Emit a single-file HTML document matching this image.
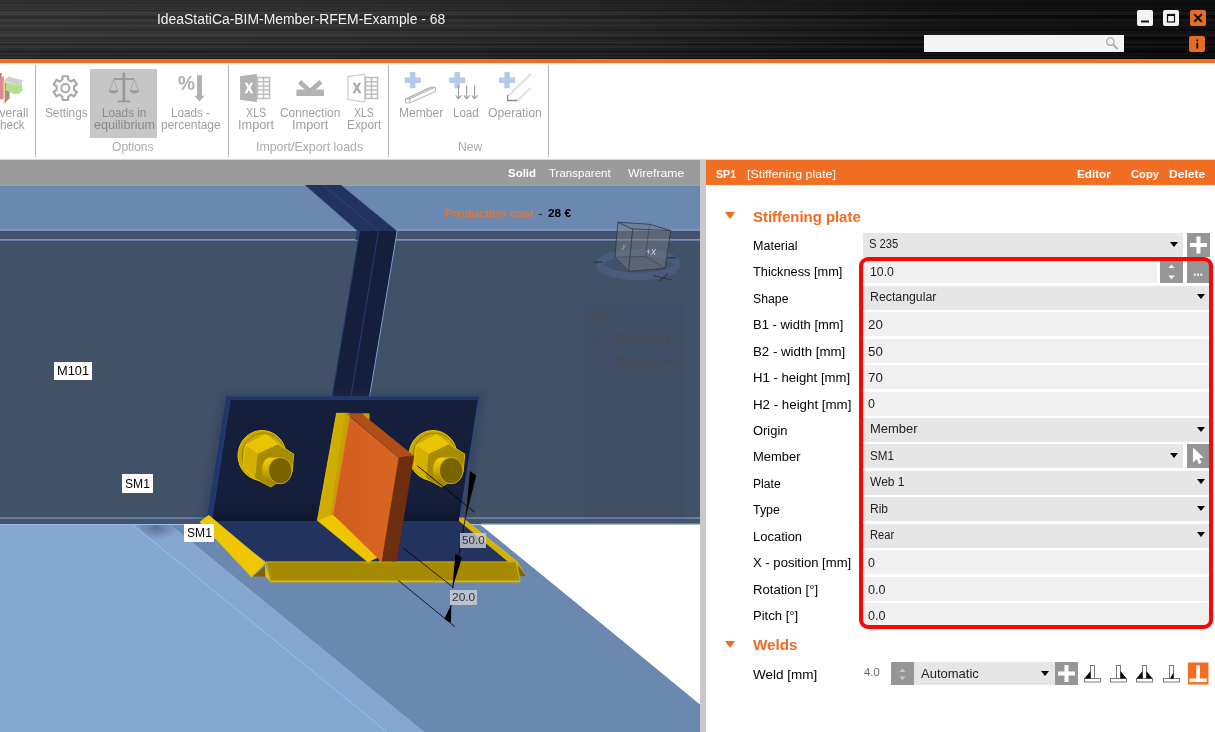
<!DOCTYPE html>
<html lang="en">
<head>
<meta charset="utf-8">
<title>IdeaStatiCa-BIM-Member-RFEM-Example - 68</title>
<style>
*{box-sizing:border-box;margin:0;padding:0}
html,body{width:1215px;height:732px;overflow:hidden;background:#fff}
body{font-family:"Liberation Sans","DejaVu Sans",sans-serif;font-size:12px;color:#000;position:relative}
.abs{position:absolute}
#titlebar{position:absolute;left:0;top:0;width:1215px;height:59px;overflow:hidden;
 background:
  linear-gradient(180deg,rgba(0,0,0,.22) 0,rgba(0,0,0,0) 12%,rgba(0,0,0,0) 62%,rgba(0,0,0,.32) 100%),
  repeating-linear-gradient(180deg,rgba(255,255,255,.055) 0,rgba(255,255,255,0) 1.5px,rgba(0,0,0,.16) 3px,rgba(0,0,0,0) 4px,rgba(255,255,255,.04) 5.5px,rgba(0,0,0,.1) 7px),
  repeating-linear-gradient(180deg,rgba(0,0,0,.14) 0,rgba(255,255,255,.05) 2px,rgba(0,0,0,0) 4.5px,rgba(0,0,0,.16) 8px,rgba(255,255,255,.045) 9.5px,rgba(0,0,0,.14) 11px),
  linear-gradient(90deg,#343434 0%,#2f2f2f 28%,#262626 48%,#1a1a1a 62%,#0e0e0e 78%,#090909 100%);}
#orange{position:absolute;left:0;top:59px;width:1215px;height:4px;background:#f26e22}
.wbtn{position:absolute;top:10px;width:16px;height:16px;border-radius:2px;background:#f2f2f2}
#search{position:absolute;left:924px;top:35px;width:200px;height:17px;background:#f4f4f4}
/* ribbon */
#ribbon{position:absolute;left:0;top:63px;width:1215px;height:97px;background:#fff;color:#9a9a9a;font-size:12px}
.sep{position:absolute;top:2px;width:1px;height:92px;background:#b5b5b5}
.rl{position:absolute;text-align:center;line-height:13px;white-space:nowrap;color:#9b9b9b;font-size:11.5px}
.gl{position:absolute;text-align:center;white-space:nowrap;color:#a4a4a4;font-size:11.5px;top:78px}
/* scene */
#vbar{position:absolute;left:0;top:160px;width:700px;height:25px;background:#9b9b9b;color:#fff;font-size:11.5px}
#split{position:absolute;left:700px;top:160px;width:6px;height:572px;background:#c9c9c9}
#scene{position:absolute;left:0;top:185px;width:700px;height:547px;overflow:hidden;background:#fff}
/* right panel */
#phead{position:absolute;left:706px;top:160px;width:509px;height:25px;background:#f26e22;color:#fff;font-size:11.5px;line-height:25px}
#panel{position:absolute;left:706px;top:185px;width:509px;height:547px;background:#fff}
.h{position:absolute;left:753px;color:#f26a1e;font-weight:bold;font-size:14.5px;white-space:nowrap;line-height:18px}
.tri{position:absolute;left:725px;width:0;height:0;border-left:5px solid transparent;border-right:5px solid transparent;border-top:7px solid #f26a1e}
.lb{position:absolute;left:753px;font-size:12.4px;line-height:24px;white-space:nowrap;color:#111}
.f{position:absolute;left:863px;height:24px;font-size:11.6px;line-height:23px;white-space:nowrap;color:#222}
.cb{background:#e6e6e6;padding-left:7px}
.tx{background:#f0f0f0;padding-left:5px}
.arr{position:absolute;width:0;height:0;border-left:4.4px solid transparent;border-right:4.4px solid transparent;border-top:5.8px solid #000;margin-left:-.5px}
.sq{position:absolute;width:24px;height:24px;background:#969696}

.tr{font-size:12px;font-weight:bold;color:#4b4f5c;line-height:16px;white-space:nowrap}
.tag{background:#fff;color:#000;font-size:12px;text-align:center;line-height:18px;white-space:nowrap}
.dim{background:rgba(204,209,218,.8);color:#333;font-size:10.5px;text-align:center;line-height:14.5px;white-space:nowrap}
.t{position:absolute;white-space:nowrap;transform-origin:0 0}
</style>
</head>
<body>
<div id="titlebar">
</div>

<div class="wbtn" style="left:1137px"><svg width="16" height="16"><rect x="4" y="10.5" width="8" height="2" fill="#111"/></svg></div>
<div class="wbtn" style="left:1163px"><svg width="16" height="16"><rect x="4.5" y="4.5" width="7" height="7.5" fill="none" stroke="#111" stroke-width="1.2"/><rect x="4" y="4" width="8" height="2" fill="#111"/></svg></div>
<div class="wbtn" style="left:1189.5px;background:#e66d22"><svg width="16" height="16"><path d="M4.3 4.3l7.4 7.4M11.7 4.3l-7.4 7.4" stroke="#111" stroke-width="2" fill="none"/></svg></div>
<div class="abs" style="left:1188.5px;top:35.5px;width:16.5px;height:16px;border-radius:2px;background:#e66d22"><svg width="16.5" height="16"><rect x="7.4" y="3.6" width="1.8" height="1.9" fill="#111"/><rect x="7.4" y="6.8" width="1.8" height="5.8" fill="#111"/></svg></div>
<div id="search"><svg width="200" height="17"><circle cx="186.3" cy="6.6" r="3.7" fill="none" stroke="#aaa" stroke-width="1.3"/><path d="M189 9.4l4.6 4.8" stroke="#aaa" stroke-width="1.8"/></svg></div>
<div id="orange"></div>
<div id="ribbon"></div>

<!-- ribbon -->
<div class="sep" style="left:35px;top:65px"></div>
<div class="sep" style="left:228px;top:65px"></div>
<div class="sep" style="left:388px;top:65px"></div>
<div class="sep" style="left:548px;top:65px"></div>
<div class="abs" style="left:0;top:159px;width:1215px;height:1px;background:#d9d9d9"></div>
<div class="abs" style="left:90px;top:69px;width:67px;height:68.5px;background:#c6c6c6"></div>
<svg class="abs" style="left:0;top:63px" width="560" height="97" viewBox="0 63 560 97">
 <!-- overall check icon -->
 <path d="M0 73.1h1.4v3.3h2.4v22.9H0z" fill="#d98d91"/>
 <path d="M0 73.1h1.4v3.3H0z" fill="#b87a7e"/>
 <path d="M4.9 82.4h1.2v7.2l3.5 2.1v6.5l-4.7 5z" fill="#a39382"/>
 <path d="M8.7 76l1.1.5-4.9 5.6v21.4l-1.4.2-.1-22.5z" fill="#f2c696"/>
 <path d="M5.2 81.3l4.6-4.4 13.7 3.6-4.6 4.9z" fill="#cfcfcf"/>
 <path d="M6 82.3l12.9 3.1 3-3v7.6l1.6-.5-4.9 4.4h-3.8l-9.9-4.3 1.1-.6z" fill="#b6dd93"/>
 <path d="M4.9 89.8l1.6-1.1 12.4 3 3-2.6 1.6.4-4.9 4.4h-3.8z" fill="#aee486"/>
  <!-- gear -->
 <g fill="none" stroke="#a9a9a9" stroke-linejoin="round">
  <path d="M68.1 79.6 L68.1 76.2 L62.5 76.2 L62.5 79.6 L59.3 81.5 L56.5 79.7 L53.6 84.6 L56.6 86.2 L56.6 90.0 L53.6 91.6 L56.5 96.5 L59.3 94.7 L62.5 96.6 L62.5 100.0 L68.1 100.0 L68.1 96.6 L71.3 94.7 L74.1 96.5 L77.0 91.6 L74.0 90.0 L74.0 86.2 L77.0 84.6 L74.1 79.7 L71.3 81.5z" stroke-width="2.1"/>
  <circle cx="65.3" cy="88.1" r="4.1" stroke-width="2"/>
 </g>
 <!-- scale -->
 <g stroke="#9a9a9a" fill="none">
  <path d="M123.9 74V101.2" stroke-width="2.8" stroke-linecap="round"/>
  <path d="M118.6 101.4H129.3" stroke-width="1.9" stroke-linecap="round"/>
  <path d="M113.6 79H134.2" stroke-width="1.8"/>
  <path d="M113.6 79.6l-4.3 11.3M113.6 79.6l4.3 11.3M134.4 79.6l-4.3 11.3M134.4 79.6l4.3 11.3" stroke-width=".8" stroke="#a2a2a2"/>
  <path d="M109 90.8q4.6 5 9.2 0zM129.8 90.8q4.6 5 9.2 0z" fill="#9a9a9a" stroke-width=".8"/>
 </g>
 <!-- percent arrow -->
 <path d="M197 75.2h4.9v20.6h2.6l-5 5.8-5.2-5.8h2.7z" fill="#b0b0b0"/>
 <!-- xls import -->
 <path d="M240.1 76.3l16.8-2.4v28.3l-16.8-2.5z" fill="#b2b2b2"/>
 <g stroke="#bcbcbc" stroke-width="1.5" fill="none">
  <rect x="257.5" y="77.5" width="12" height="21"/>
  <path d="M263.5 77.5v21M257.5 81.7h12M257.5 85.9h12M257.5 90.1h12M257.5 94.3h12"/>
 </g>
 <!-- connection import -->
 <rect x="296.4" y="89.6" width="27.6" height="6.4" fill="#b2b2b2"/>
 <path d="M299.5 81.7L311 92M320.9 81.7L309.4 92" stroke="#b2b2b2" stroke-width="4.7" fill="none"/>
 <!-- xls export -->
 <path d="M347.9 76.6l16.8-2.5v28l-16.8-2.5z" fill="#fff" stroke="#c9c9c9" stroke-width="1.1"/>
 <g stroke="#bcbcbc" stroke-width="1.5" fill="none">
  <rect x="365.5" y="77.5" width="12" height="21"/>
  <path d="M371.5 77.5v21M365.5 81.7h12M365.5 85.9h12M365.5 90.1h12M365.5 94.3h12"/>
 </g>
 <!-- member -->
 <path d="M410 72.1h5.4v5.4h5.4v5.4h-5.4v5.4h-5.4v-5.4h-5.4v-5.4h5.4z" fill="#b3caeb"/>
 <g stroke="#b2b2b2" stroke-width="1" fill="#fff">
  <path d="M405.5 98.8l25-11.6 4.8 0.2v4.2l-25.4 11.3h-4.4z"/>
  <path d="M405.5 98.8h4.4v4.1M409.9 98.8l25-11.4M407.5 98.6l25-11.4" fill="none"/>
 </g>
 <!-- load -->
 <path d="M454.5 72.1h5.4v5.4h5.4v5.4h-5.4v5.4h-5.4v-5.4h-5.4v-5.4h5.4z" fill="#b3caeb"/>
 <g stroke="#999" stroke-width="1.1" fill="none">
  <path d="M458.5 85.5v13M455.6 95.3l2.9 3.4 2.9-3.4M466.7 85.5v13M463.8 95.3l2.9 3.4 2.9-3.4M474.6 85.5v13M471.7 95.3l2.9 3.4 2.9-3.4"/>
 </g>
 <!-- operation -->
 <path d="M504.4 72.1h5.4v5.4h5.4v5.4h-5.4v5.4h-5.4v-5.4h-5.4v-5.4h5.4z" fill="#b3caeb"/>
 <path d="M507.4 95.3l23.4-21.8v14l-13.6 13.2h-9.8z" fill="#fff"/>
 <g stroke="#e3e3e3" stroke-width="2.5" fill="none"><path d="M508.3 95.6l22.6-21.6M517.8 100.4l13-12.6"/></g>
 <path d="M507.6 95v5.5h9.8" stroke="#8c8c8c" stroke-width="1.3" fill="none"/>
</svg>
<div id="vbar"></div>
<div id="scene"></div>

<svg class="abs" style="left:0;top:185px" width="700" height="547" viewBox="0 185 700 547">
 <defs>
  <linearGradient id="gw" x1="0" y1="0" x2="0" y2="1"><stop offset="0" stop-color="#151e3b"/><stop offset=".8" stop-color="#151e3b"/><stop offset="1" stop-color="#101830"/></linearGradient>
  <radialGradient id="gsh" cx=".5" cy=".5" r=".5"><stop offset="0" stop-color="#2c3c5c" stop-opacity=".5"/><stop offset="1" stop-color="#2c3c5c" stop-opacity="0"/></radialGradient>
  <linearGradient id="gor" x1="0" y1="0" x2="1" y2="0"><stop offset="0" stop-color="#cf5d1f"/><stop offset=".5" stop-color="#d66221"/><stop offset="1" stop-color="#d86522"/></linearGradient>
  <linearGradient id="gcy" x1="0" y1="0" x2="0" y2="1"><stop offset="0" stop-color="#f2cf00"/><stop offset=".45" stop-color="#d8b400"/><stop offset="1" stop-color="#9a8000"/></linearGradient>
 </defs>
 <!-- white background right -->
 <rect x="0" y="185" width="700" height="547" fill="#fff"/>
 <!-- top flange band -->
 <rect x="0" y="185" width="700" height="46" fill="#6b89b0"/>
 <rect x="0" y="185" width="700" height="1" fill="#85a5d2"/>
 <!-- web -->
 <rect x="0" y="230" width="700" height="295" fill="#415168"/>
 <rect x="0" y="230.5" width="700" height="9" fill="#44536b"/>
 <rect x="0" y="229.6" width="700" height="1.2" fill="#84a4d0"/>
 <rect x="0" y="239.2" width="700" height="1.3" fill="#86a6d4"/>
 <!-- lower flange: light blue + mid blue -->
 <path d="M0 524.5H481l219 180V732H0z" fill="#6b89b0"/>
 <path d="M0 524.5H170.2L424 732H0z" fill="#86a6d2"/>
 <path d="M479.4 524L700 703.2V524z" fill="#fff"/>
 <path d="M133 525L387.2 732" stroke="#9cbdec" stroke-width="1" fill="none"/>
 <path d="M170.2 525L424 732" stroke="#93b2dc" stroke-width=".6" fill="none"/>
 
 <!-- web bottom edge -->
 <rect x="0" y="518.2" width="700" height="6.3" fill="#44536b"/>
 <rect x="0" y="517.5" width="700" height="1.1" fill="#7f9fca"/>
 <rect x="0" y="524" width="481" height="1.1" fill="#9dbbe4"/>
 <rect x="481" y="523.6" width="219" height="1" fill="#b9c6da"/>
 <!-- shadows -->
 <clipPath id="cpsh"><path d="M134 525H172L200 548H162z"/></clipPath><ellipse cx="156" cy="527" rx="24" ry="13" fill="url(#gsh)" clip-path="url(#cpsh)"/>
 <!-- stiffener strip on M101 -->
 <path d="M304.7 185H341.2L397.2 231 357.4 231z" fill="#22335f"/>
 <path d="M323 185L378.4 231" stroke="#2f4a8a" stroke-width=".8"/>
 <path d="M304.7 185L357.4 231M341.2 185L397.2 231" stroke="#5a78b0" stroke-width=".7" fill="none"/>
 <path d="M356.5 231h3.6l-1.4 9h-3.4z" fill="#2b3f6f"/>
 <path d="M359.8 231H397.2L369.6 396.5H332.2z" fill="#151e3b"/>
 <path d="M378.4 231L350.8 396.5" stroke="#2a3f78" stroke-width=".9"/>
 <path d="M359.8 231L332.2 396.5" stroke="#243a70" stroke-width=".9"/>
 <path d="M397.2 231L369.6 396.5" stroke="#7d9ccc" stroke-width="1"/>
 <!-- cleat shadow on web -->
 <path d="M222 392H486L466 524H200z" fill="#2b3850" opacity=".35" style="filter:blur(3px)"/>
 <!-- vertical plate -->
 <path d="M226.3 396.5H479L459.3 521H206.3z" fill="#21366c"/>
 <path d="M212 521L230.5 399.8H478.4" stroke="#2b4686" stroke-width=".9" fill="none"/>
 <path d="M230.5 399.8H478.4L459.3 521H212z" fill="url(#gw)"/>
 <path d="M478.6 399.8L459.5 521" stroke="#2d4a8c" stroke-width="1.2"/>
 <!-- horizontal plate -->
 <path d="M212 521H459.3L508.5 562H266.4z" fill="#22335f"/>
 <!-- right thin weld -->
 <path d="M459 517.4l3.6.4 55.6 44.8 7.8 13.6-6.8-.2-3-13.6H509L459 521z" fill="#d4b000"/>
 <path d="M462.6 517.8l55.6 44.8" stroke="#ecc800" stroke-width=".8" fill="none"/>
 <path d="M517.5 564.5l8.5 11.7-6.4-.2z" fill="#7a6400"/>
 <!-- left weld -->
 <path d="M208.8 515.3L199.8 521.9 251.6 577 265.6 563z" fill="#efc700" stroke="#f6d400" stroke-width=".6"/>
 <path d="M252.6 576.5L264.8 566.8 265.4 576.4z" fill="#7a6400"/>
 <path d="M264.8 563L270.8 582 265.6 576.6z" fill="#e8c200"/>
 <!-- bottom weld -->
 <path d="M266.2 562H516.1L520.2 582H270.6z" fill="#a58a00" stroke="#dcb900" stroke-width=".8"/>
 <path d="M270.3 581.2H520.2" stroke="#dcb800" stroke-width="1.4"/>
 <path d="M266.2 562H516.1" stroke="#b89a00" stroke-width="1"/>
 <!-- weld left of orange plate -->
 <path d="M336.6 413.3H349.8L333 515 317.4 520.5z" fill="#cfac00" stroke="#efcf00" stroke-width=".8"/>
 <path d="M345 413.3h4.8L333 515l-3 1z" fill="#c4a200"/>
 <path d="M317.4 520.8L333 514.4 381.4 555.4 368 562.4z" fill="#eec600"/>
 <path d="M362 413.3h7.5v7l-2.5-.3z" fill="#c4a200"/>
 <path d="M381 555.5l5 .2 7 6.3h-14z" fill="#b89a00"/>
 <use href="#bolt" x="171" y="0"/>
 <!-- orange plate -->
 <path d="M349.8 416.5L398.3 457.4 381.2 561.6 333 514.4z" fill="url(#gor)"/>
 <path d="M346.5 413.3H361.3L414 455.8 398.3 457.4z" fill="#b04e18"/>
 <path d="M398.3 457.4L414 455.8 396.8 561.6H381.2z" fill="#6e2f10"/>
 <path d="M349.8 416.5L333 514.4" stroke="#e87a30" stroke-width="1"/>
 <path d="M398.3 457.4L381.2 561.6" stroke="#e07028" stroke-width=".8"/>
 <!-- bolts -->
 <g id="bolt">
  <ellipse cx="262" cy="455.5" rx="24" ry="25" fill="#c8a800" stroke="#e8c800" stroke-width="1"/>
  <ellipse cx="263.5" cy="455.5" rx="21.5" ry="22.5" fill="none" stroke="#8a7200" stroke-width=".8"/>
  <path d="M245.3 445L265.8 434.4 278.2 444.3 257.6 454z" fill="#e8c500"/>
  <path d="M245.3 445L257.6 454 255.1 478.8 243.1 467.3z" fill="#d4b000"/>
  <path d="M257.6 454L278.2 444.3 293.8 454.1 292.2 472.2 270.8 487 255.1 478.8z" fill="#a88c00"/>
  <path d="M245.3 445L265.8 434.4 278.2 444.3 293.8 454.1 292.2 472.2 270.8 487 255.1 478.8 243.1 467.3z" fill="none" stroke="#f0d000" stroke-width=".7"/>
  <path d="M269 458.5L280.2 457.4V483.8L269 481z" fill="url(#gcy)"/>
  <ellipse cx="269.5" cy="470" rx="7.5" ry="12.2" fill="url(#gcy)"/>
  <rect x="269.5" y="457.6" width="11" height="26" fill="url(#gcy)"/>
  <ellipse cx="280.2" cy="470.6" rx="11.8" ry="13.2" fill="#7a6400" stroke="#e0be00" stroke-width=".8"/>
 </g>
 <!-- dimension lines -->
 <g stroke="#000" stroke-width=".8" fill="none">
  <path d="M417.2 465.7L475 512.5"/>
  <path d="M403.4 548.2L453.6 587.7"/>
  <path d="M398.1 580.3L454.9 626.7"/>
  <path d="M473 474L465.4 517.7 459.3 552.3 452.6 588"/>
  <path d="M451.1 605L447.5 621"/>
 </g>
 <path d="M469.9 471L476.2 475.5 466 516z" fill="#000"/>
 <path d="M455.4 553.2L461.8 558.1 452.4 588z" fill="#000"/>
 <path d="M451.3 604.5L444.3 619 451 622.8z" fill="#000"/>
 <!-- view cube -->
 <g>
  <ellipse cx="638.6" cy="264.4" rx="38.5" ry="12" fill="none" stroke="#4a5c7b" stroke-width="7.5"/>
  <path d="M617.8 222.2L649.6 224.3 670.8 230.6 665 268.3 628.7 271.4 615 257.3z" fill="#767a84" fill-opacity=".5"/>
  <g stroke="#2f3540" stroke-width=".8" fill="none">
   <path d="M617.8 222.2L649.6 224.3 670.8 230.6 632.6 229z"/>
   <path d="M632.6 229L628.7 271.4 665 268.3 670.8 230.6"/>
   <path d="M617.8 222.2L615 257.3 628.7 271.4"/>
   <path d="M649.6 224.3L645.6 256.5 615 257.3M645.6 256.5L665 268.3" stroke-opacity=".6"/>
  </g>
  <path d="M593.8 262.2h8.6M667 258.2l4-.6 5 .2M653 275.5l19 4.5M659 281.5l9-8" stroke="#2f3540" stroke-width="1.2" fill="none"/>
 </g>
 <!-- tree panel -->
 <rect x="583.5" y="304.7" width="101" height="213" fill="#36435c" opacity=".09"/>
</svg>
<div class="abs" style="left:591px;top:335px;width:0;height:0;border-top:3.8px solid transparent;border-bottom:3.8px solid transparent;border-left:6px solid #474a52"></div>
<div class="abs" style="left:591px;top:357.5px;width:0;height:0;border-top:3.8px solid transparent;border-bottom:3.8px solid transparent;border-left:6px solid #474a52"></div>
<div class="abs tag" style="left:54px;top:361.7px;width:38px;height:18.4px"></div>
<div class="abs tag" style="left:122px;top:474px;width:30.8px;height:19px"></div>
<div class="abs tag" style="left:184px;top:524px;width:30px;height:18px"></div>
<div class="abs dim" style="left:460px;top:533px;width:26px;height:14.7px"></div>
<div class="abs dim" style="left:450px;top:589.5px;width:27px;height:15px"></div>
<div id="split"></div>
<div id="phead"></div>
<div id="panel"></div>

<!-- panel header -->
<div class="tri" style="top:212px"></div>
<div class="f cb" style="top:232.9px;width:320px"></div>
<div class="arr" style="left:1170.5px;top:241.5px"></div>
<div class="f tx" style="top:259.34px;width:294px"></div>
<div class="f cb" style="top:285.78px;width:347px"></div>
<div class="arr" style="left:1197.5px;top:294.38px"></div>
<div class="f tx" style="top:312.22px;width:347px"></div>
<div class="f tx" style="top:338.66px;width:347px"></div>
<div class="f tx" style="top:365.1px;width:347px"></div>
<div class="f tx" style="top:391.54px;width:347px"></div>
<div class="f cb" style="top:417.98px;width:347px"></div>
<div class="arr" style="left:1197.5px;top:426.58px"></div>
<div class="f cb" style="top:444.42px;width:320px"></div>
<div class="arr" style="left:1170.5px;top:453.02px"></div>
<div class="f cb" style="top:470.86px;width:347px"></div>
<div class="arr" style="left:1197.5px;top:479.46px"></div>
<div class="f cb" style="top:497.3px;width:347px"></div>
<div class="arr" style="left:1197.5px;top:505.9px"></div>
<div class="f cb" style="top:523.74px;width:347px"></div>
<div class="arr" style="left:1197.5px;top:532.34px"></div>
<div class="f tx" style="top:550.18px;width:347px"></div>
<div class="f tx" style="top:576.62px;width:347px"></div>
<div class="f tx" style="top:603.06px;width:347px"></div>

<!-- side buttons -->
<div class="sq" id="plus1" style="left:1187px;top:232.9px;width:23px">
 <svg width="23" height="24" viewBox="0 0 23 24"><path d="M9.5 3.5h4v6.5h6.5v4h-6.5v6.5h-4v-6.5H3v-4h6.5z" fill="#fff"/></svg>
</div>
<div class="sq" id="spin1" style="left:1160px;top:259.34px;width:23px">
 <svg width="23" height="24" viewBox="0 0 23 24"><path d="M8.3 9l3.2-3.6 3.2 3.6zM8.3 16.6l3.2 3.6 3.2-3.6z" fill="#f4f4f4"/></svg>
</div>
<div class="sq" id="dots1" style="left:1187px;top:259.34px;width:23px">
 <svg width="23" height="24" viewBox="0 0 23 24"><rect x="6.7" y="14.6" width="2" height="2.2" fill="#f0f0f0"/><rect x="10" y="14.6" width="2" height="2.2" fill="#f0f0f0"/><rect x="13.3" y="14.6" width="2" height="2.2" fill="#f0f0f0"/></svg>
</div>
<div class="sq" id="cur1" style="left:1187px;top:444.42px;width:23px">
 <svg width="23" height="24" viewBox="0 0 23 24"><path d="M6 3.5v15l3.6-3.4 2.3 4.9 2.6-1.2-2.3-4.8h4.6z" fill="#fff"/></svg>
</div>
<!-- red highlight -->
<div class="abs" style="left:859px;top:257px;width:354px;height:371.5px;border:4px solid #fb0505;border-radius:9px"></div>
<!-- welds -->
<div class="tri" style="top:640.5px"></div>
<div class="sq" id="spin2" style="left:890.5px;top:661.5px;width:23px;height:23.5px">
 <svg width="23" height="24" viewBox="0 0 23 24"><path d="M8.5 10l3-3.5 3 3.5zM8.5 14.5l3 3.5 3-3.5z" fill="#c8c8c8"/></svg>
</div>
<div class="f cb" style="left:913.5px;top:661.5px;width:141px;height:23.5px;font-size:12.4px"></div>
<div class="arr" style="left:1041.5px;top:670.5px"></div>
<div class="sq" id="plus2" style="left:1054.5px;top:661.5px;width:23px;height:23.5px">
 <svg width="23" height="24" viewBox="0 0 23 24"><path d="M9.5 3h4v6.5h6.5v4h-6.5v6.5h-4v-6.5H3v-4h6.5z" fill="#fff"/></svg>
</div>
<svg class="abs" style="left:1080px;top:660px" width="135" height="28" viewBox="1080 660 135 28">
 <g fill="#fff" stroke="#6e6e6e" stroke-width=".9">
  <rect x="1090.5" y="665.5" width="4" height="13"/><rect x="1084.5" y="678.5" width="16" height="3.5"/>
  <rect x="1116.5" y="665.5" width="4" height="13"/><rect x="1110.5" y="678.5" width="16" height="3.5"/>
  <rect x="1142.5" y="665.5" width="4" height="13"/><rect x="1136.5" y="678.5" width="16" height="3.5"/>
  <rect x="1169.5" y="665.5" width="4" height="13"/><rect x="1163.5" y="678.5" width="16" height="3.5"/>
 </g>
 <path d="M1084.5 678.5l6-7.5v7.5z" fill="#000"/>
 <path d="M1126.5 678.5l-6-7.5v7.5z" fill="#000"/>
 <path d="M1136.5 678.5l6-7.5v7.5zM1152.5 678.5l-6-7.5v7.5z" fill="#000"/>
 <path d="M1173.5 672.5l-3.5 6h3.5z" fill="#000"/>
 <rect x="1188" y="662.5" width="20.5" height="22" fill="#f26e22"/>
 <rect x="1196.3" y="665.5" width="3.6" height="13.5" fill="#fff"/><rect x="1189.5" y="678.5" width="17.2" height="3.6" fill="#fff"/>
</svg>
<div class="t" id="title" style="left:157px;top:10px;font-size:15.2px;line-height:17px;color:#f2f2f2;transform:scaleX(0.9157)">IdeaStatiCa-BIM-Member-RFEM-Example - 68</div>
<div class="t" id="r_ov1" style="left:-10.5px;top:106px;font-size:11.9px;line-height:14px;color:#9e9e9e;transform:scaleX(1.0180)">Overall</div>
<div class="t" id="r_ov2" style="left:-6px;top:118px;font-size:11.9px;line-height:14px;color:#9e9e9e;transform:scaleX(0.9898)">check</div>
<div class="t" id="r_set" style="left:44.8px;top:106px;font-size:11.9px;line-height:14px;color:#9e9e9e;transform:scaleX(0.9920)">Settings</div>
<div class="t" id="r_le1" style="left:102.2px;top:106px;font-size:11.9px;line-height:14px;color:#8a8a8a;transform:scaleX(0.9877)">Loads in</div>
<div class="t" id="r_le2" style="left:93.6px;top:118px;font-size:11.9px;line-height:14px;color:#8a8a8a;transform:scaleX(1.0597)">equilibrium</div>
<div class="t" id="r_lp1" style="left:171.4px;top:106px;font-size:11.9px;line-height:14px;color:#9e9e9e;transform:scaleX(0.9786)">Loads -</div>
<div class="t" id="r_lp2" style="left:161.2px;top:118px;font-size:11.9px;line-height:14px;color:#9e9e9e;transform:scaleX(1.0020)">percentage</div>
<div class="t" id="r_xi1" style="left:246px;top:106px;font-size:11.9px;line-height:14px;color:#9e9e9e;transform:scaleX(0.8984)">XLS</div>
<div class="t" id="r_xi2" style="left:237.9px;top:118px;font-size:11.9px;line-height:14px;color:#9e9e9e;transform:scaleX(1.0709)">Import</div>
<div class="t" id="r_ci1" style="left:279.8px;top:106px;font-size:11.9px;line-height:14px;color:#9e9e9e;transform:scaleX(1.0023)">Connection</div>
<div class="t" id="r_ci2" style="left:292.2px;top:118px;font-size:11.9px;line-height:14px;color:#9e9e9e;transform:scaleX(1.0769)">Import</div>
<div class="t" id="r_xe1" style="left:354px;top:106px;font-size:11.9px;line-height:14px;color:#9e9e9e;transform:scaleX(0.8847)">XLS</div>
<div class="t" id="r_xe2" style="left:346.7px;top:118px;font-size:11.9px;line-height:14px;color:#9e9e9e;transform:scaleX(0.9962)">Export</div>
<div class="t" id="r_me" style="left:398.7px;top:106px;font-size:11.9px;line-height:14px;color:#9e9e9e;transform:scaleX(1.0167)">Member</div>
<div class="t" id="r_lo" style="left:452.9px;top:106px;font-size:11.9px;line-height:14px;color:#9e9e9e;transform:scaleX(0.9732)">Load</div>
<div class="t" id="r_op" style="left:487.8px;top:106px;font-size:11.9px;line-height:14px;color:#9e9e9e;transform:scaleX(1.0305)">Operation</div>
<div class="t" id="g_op" style="left:112.2px;top:140px;font-size:11.9px;line-height:14px;color:#ababab;transform:scaleX(1.0160)">Options</div>
<div class="t" id="g_ie" style="left:255.5px;top:140px;font-size:11.9px;line-height:14px;color:#ababab;transform:scaleX(1.0390)">Import/Export loads</div>
<div class="t" id="g_nw" style="left:457.8px;top:140px;font-size:11.9px;line-height:14px;color:#ababab;transform:scaleX(1.0160)">New</div>
<div class="t" id="i_pct" style="left:177.8px;top:72px;font-size:19.5px;line-height:22px;color:#b0b0b0;font-weight:bold;transform:scaleX(0.9810)">%</div>
<div class="t" id="i_x1" style="left:245.4px;top:80px;font-size:14.5px;line-height:16px;color:#fff;font-weight:bold;-webkit-text-stroke:.6px #fff;transform:scaleX(0.8162)">X</div>
<div class="t" id="i_x2" style="left:353.1px;top:80px;font-size:14.5px;line-height:16px;color:#a8a8a8;font-weight:bold;-webkit-text-stroke:.6px #a8a8a8;transform:scaleX(0.8162)">X</div>
<div class="t" id="vsolid" style="left:508.3px;top:167px;font-size:11.5px;line-height:12px;color:#fff;font-weight:bold;transform:scaleX(0.9967)">Solid</div>
<div class="t" id="vtrans" style="left:549px;top:167px;font-size:11.5px;line-height:12px;color:#fff;transform:scaleX(1.0020)">Transparent</div>
<div class="t" id="vwire" style="left:627.7px;top:167px;font-size:11.5px;line-height:12px;color:#fff;transform:scaleX(1.0601)">Wireframe</div>
<div class="t" id="ph1" style="left:715.8px;top:168px;font-size:11.3px;line-height:12px;color:#fff;font-weight:bold;transform:scaleX(0.9409)">SP1</div>
<div class="t" id="ph2" style="left:746.8px;top:168px;font-size:11.3px;line-height:12px;color:#fff;transform:scaleX(1.1009)">[Stiffening plate]</div>
<div class="t" id="ph3" style="left:1076.7px;top:168px;font-size:11.3px;line-height:12px;color:#fff;font-weight:bold;transform:scaleX(1.0366)">Editor</div>
<div class="t" id="ph4" style="left:1131px;top:168px;font-size:11.3px;line-height:12px;color:#fff;font-weight:bold;transform:scaleX(0.9917)">Copy</div>
<div class="t" id="ph5" style="left:1168.6px;top:168px;font-size:11.3px;line-height:12px;color:#fff;font-weight:bold;transform:scaleX(1.0687)">Delete</div>
<div class="t" id="h1" style="left:753px;top:208px;font-size:15px;line-height:17px;color:#f26a1e;font-weight:bold;transform:scaleX(0.9939)">Stiffening plate</div>
<div class="t" id="h2" style="left:753px;top:636px;font-size:15px;line-height:17px;color:#f26a1e;font-weight:bold;transform:scaleX(1.0117)">Welds</div>
<div class="t" id="l0" style="left:753.2px;top:239px;font-size:12.5px;line-height:14px;color:#000;transform:scaleX(1.0020)">Material</div>
<div class="t" id="v0" style="left:869px;top:237px;font-size:12px;line-height:14px;color:#222;transform:scaleX(0.9348)">S 235</div>
<div class="t" id="l1" style="left:753.2px;top:265px;font-size:12.5px;line-height:14px;color:#000;transform:scaleX(1.0214)">Thickness [mm]</div>
<div class="t" id="v1" style="left:869.6px;top:265px;font-size:12px;line-height:14px;color:#222;transform:scaleX(1.0227)">10.0</div>
<div class="t" id="l2" style="left:753.2px;top:292px;font-size:12.5px;line-height:14px;color:#000;transform:scaleX(0.9809)">Shape</div>
<div class="t" id="v2" style="left:869.6px;top:290px;font-size:12px;line-height:14px;color:#222;transform:scaleX(1.0261)">Rectangular</div>
<div class="t" id="l3" style="left:753.2px;top:318px;font-size:12.5px;line-height:14px;color:#000;transform:scaleX(1.0400)">B1 - width [mm]</div>
<div class="t" id="v3" style="left:867.6px;top:318px;font-size:12px;line-height:14px;color:#222;transform:scaleX(1.1053)">20</div>
<div class="t" id="l4" style="left:753.2px;top:345px;font-size:12.5px;line-height:14px;color:#000;transform:scaleX(1.0620)">B2 - width [mm]</div>
<div class="t" id="v4" style="left:867.6px;top:345px;font-size:12px;line-height:14px;color:#222;transform:scaleX(1.1053)">50</div>
<div class="t" id="l5" style="left:753.2px;top:371px;font-size:12.5px;line-height:14px;color:#000;transform:scaleX(1.0509)">H1 - height [mm]</div>
<div class="t" id="v5" style="left:867.6px;top:371px;font-size:12px;line-height:14px;color:#222;transform:scaleX(1.1053)">70</div>
<div class="t" id="l6" style="left:753.2px;top:398px;font-size:12.5px;line-height:14px;color:#000;transform:scaleX(1.0651)">H2 - height [mm]</div>
<div class="t" id="v6" style="left:867.9px;top:397px;font-size:12px;line-height:14px;color:#222;transform:scaleX(1.0366)">0</div>
<div class="t" id="l7" style="left:753.2px;top:424px;font-size:12.5px;line-height:14px;color:#000;transform:scaleX(1.0349)">Origin</div>
<div class="t" id="v7" style="left:869.7px;top:422px;font-size:12px;line-height:14px;color:#222;transform:scaleX(1.0787)">Member</div>
<div class="t" id="l8" style="left:753.2px;top:450px;font-size:12.5px;line-height:14px;color:#000;transform:scaleX(1.0357)">Member</div>
<div class="t" id="v8" style="left:869.7px;top:449px;font-size:12px;line-height:14px;color:#222;transform:scaleX(0.9660)">SM1</div>
<div class="t" id="l9" style="left:753.2px;top:477px;font-size:12.5px;line-height:14px;color:#000;transform:scaleX(0.9710)">Plate</div>
<div class="t" id="v9" style="left:869.7px;top:475px;font-size:12px;line-height:14px;color:#222;transform:scaleX(1.0020)">Web 1</div>
<div class="t" id="l10" style="left:753.2px;top:503px;font-size:12.5px;line-height:14px;color:#000;transform:scaleX(0.9919)">Type</div>
<div class="t" id="v10" style="left:869.7px;top:502px;font-size:12px;line-height:14px;color:#222;transform:scaleX(1.0020)">Rib</div>
<div class="t" id="l11" style="left:753.2px;top:530px;font-size:12.5px;line-height:14px;color:#000;transform:scaleX(1.0384)">Location</div>
<div class="t" id="v11" style="left:869.7px;top:528px;font-size:12px;line-height:14px;color:#222;transform:scaleX(0.9271)">Rear</div>
<div class="t" id="l12" style="left:753.2px;top:556px;font-size:12.5px;line-height:14px;color:#000;transform:scaleX(1.0470)">X - position [mm]</div>
<div class="t" id="v12" style="left:867.9px;top:556px;font-size:12px;line-height:14px;color:#222;transform:scaleX(1.0366)">0</div>
<div class="t" id="l13" style="left:753.2px;top:583px;font-size:12.5px;line-height:14px;color:#000;transform:scaleX(1.0496)">Rotation [°]</div>
<div class="t" id="v13" style="left:867.9px;top:583px;font-size:12px;line-height:14px;color:#222;transform:scaleX(1.0499)">0.0</div>
<div class="t" id="l14" style="left:753.2px;top:609px;font-size:12.5px;line-height:14px;color:#000;transform:scaleX(1.0457)">Pitch [°]</div>
<div class="t" id="v14" style="left:867.9px;top:609px;font-size:12px;line-height:14px;color:#222;transform:scaleX(1.0499)">0.0</div>
<div class="t" id="lw" style="left:753.2px;top:668px;font-size:12.5px;line-height:14px;color:#000;transform:scaleX(1.0804)">Weld [mm]</div>
<div class="t" id="vw0" style="left:863.6px;top:666px;font-size:11.6px;line-height:12px;color:#666;transform:scaleX(0.9702)">4.0</div>
<div class="t" id="vw1" style="left:920.8px;top:667px;font-size:12.6px;line-height:14px;color:#222;transform:scaleX(1.0333)">Automatic</div>
<div class="t" id="pc" style="left:444.5px;top:207px;font-size:11.2px;line-height:12px;color:#ea742a;font-weight:bold;transform:scaleX(1.0419)">Production cost</div>
<div class="t" id="pcd" style="left:538.2px;top:207px;font-size:11.2px;line-height:12px;color:#222;transform:scaleX(1.2379)">-</div>
<div class="t" id="pcv" style="left:547.9px;top:207px;font-size:11.2px;line-height:12px;color:#000;font-weight:bold;transform:scaleX(1.0542)">28 €</div>
<div class="t" id="vcx" style="left:646px;top:247px;font-size:8.5px;line-height:10px;color:#d0d4dc;font-style:italic;transform:scaleX(0.9456)">+X</div>
<div class="t" id="vcy" style="left:621.2px;top:244px;font-size:7px;line-height:7px;color:#c4c8d2;font-style:italic;transform:scaleX(0.6066)">-Y</div>
<div class="t" id="t68" style="left:593.3px;top:310px;font-size:12px;line-height:14px;color:#474a52;font-weight:bold;transform:scaleX(1.0895)">68</div>
<div class="t" id="tmem" style="left:613.9px;top:332px;font-size:12px;line-height:14px;color:#474a52;font-weight:bold;transform:scaleX(1.0965)">Members</div>
<div class="t" id="tops" style="left:613.9px;top:355px;font-size:12px;line-height:14px;color:#474a52;font-weight:bold;transform:scaleX(1.0675)">Operations</div>
<div class="t" id="m101" style="left:57px;top:364px;font-size:12px;line-height:14px;color:#000;transform:scaleX(1.0691)">M101</div>
<div class="t" id="sm1a" style="left:124.7px;top:477px;font-size:12px;line-height:14px;color:#000;transform:scaleX(1.0076)">SM1</div>
<div class="t" id="sm1b" style="left:186.7px;top:526px;font-size:12px;line-height:14px;color:#000;transform:scaleX(1.0076)">SM1</div>
<div class="t" id="d50" style="left:462px;top:534px;font-size:10.6px;line-height:12px;color:#333;transform:scaleX(1.0983)">50.0</div>
<div class="t" id="d20" style="left:452px;top:591px;font-size:10.6px;line-height:12px;color:#333;transform:scaleX(1.1283)">20.0</div>
</body>
</html>
